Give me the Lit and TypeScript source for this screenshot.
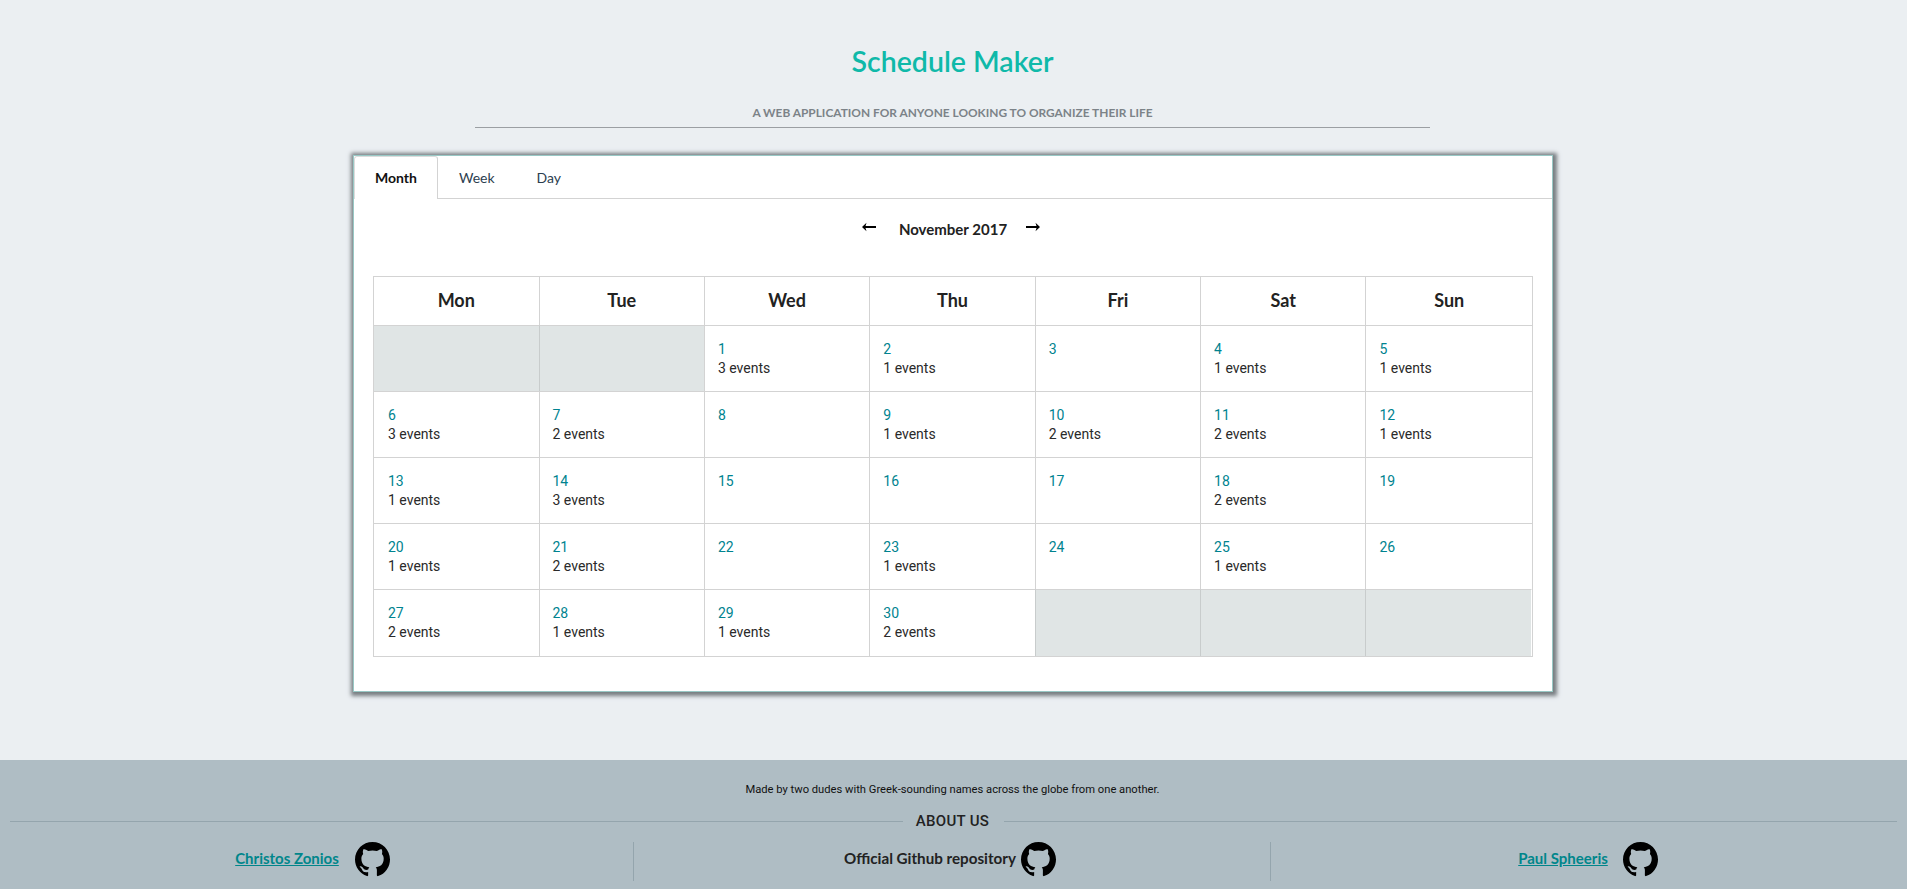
import { LitElement, html, css, svg } from "lit";
import { customElement } from "lit/decorators.js";

const GH = svg`<path fill-rule="evenodd" d="M8 0C3.58 0 0 3.58 0 8c0 3.54 2.29 6.53 5.47 7.59.4.07.55-.17.55-.38 0-.19-.01-.82-.01-1.49-2.01.37-2.53-.49-2.69-.94-.09-.23-.48-.94-.82-1.13-.28-.15-.68-.52-.01-.53.63-.01 1.08.58 1.23.82.72 1.21 1.87.87 2.33.66.07-.52.28-.87.51-1.07-1.78-.2-3.64-.89-3.64-3.95 0-.87.31-1.59.82-2.15-.08-.2-.36-1.02.08-2.12 0 0 .67-.21 2.2.82.64-.18 1.32-.27 2-.27s1.36.09 2 .27c1.53-1.04 2.2-.82 2.2-.82.44 1.1.16 1.92.08 2.12.51.56.82 1.27.82 2.15 0 3.07-1.87 3.75-3.65 3.95.29.25.54.73.54 1.48 0 1.07-.01 1.93-.01 2.2 0 .21.15.46.55.38A8.01 8.01 0 0 0 16 8c0-4.42-3.58-8-8-8z"/>`;

const ghIcon = () => html`<svg class="gh" viewBox="0 0 16 16" aria-hidden="true">${GH}</svg>`;

const DAYS = ["Mon", "Tue", "Wed", "Thu", "Fri", "Sat", "Sun"];
// null = cell outside the month
const CELLS: ([number, number] | null)[] = [
  null, null, [1, 3], [2, 1], [3, 0], [4, 1], [5, 1],
  [6, 3], [7, 2], [8, 0], [9, 1], [10, 2], [11, 2], [12, 1],
  [13, 1], [14, 3], [15, 0], [16, 0], [17, 0], [18, 2], [19, 0],
  [20, 1], [21, 2], [22, 0], [23, 1], [24, 0], [25, 1], [26, 0],
  [27, 2], [28, 1], [29, 1], [30, 2], null, null, null,
];

@customElement("app-root")
export class AppRoot extends LitElement {
  static styles = css`
    :host {
      display: block;
      height: 889px;
      overflow: hidden;
      background: #ebeff2;
      font-family: "Lato", sans-serif;
      color: #222;
    }
    .main { width: 1906px; }
    .head { display: flex; flex-direction: column; align-items: center; height: 155px; padding-right: 1px; box-sizing: border-box; }
    h1 {
      margin: 43px 0 0;
      height: 36px;
      line-height: 36px;
      font-size: 28.5px;
      font-weight: 600;
      color: #0fb9a9;
    }
    .sub {
      margin-top: 26px;
      width: 955px;
      height: 23px;
      box-sizing: border-box;
      text-align: center;
      font-size: 11.9px;
      line-height: 16px;
      font-weight: 700;
      color: #7c8388;
      text-transform: uppercase;
      border-bottom: 1px solid #9b9fa3;
    }
    .card {
      box-sizing: border-box;
      width: 1200px;
      height: 537px;
      margin: 0 auto;
      background: #fff;
      border: 1px solid #98c8c5;
      box-shadow: 1px 1px 4px 3px #777d81;
    }
    .tabs { display: flex; height: 43px; box-sizing: border-box; border-bottom: 1px solid #d3d3d3; font-size: 14px; }
    .tab { padding: 0 21px; line-height: 43px; color: #2c3e50; }
    .tab.on {
      height: 43px;
      box-sizing: border-box;
      padding: 0 20px;
      line-height: 41px;
      background: #fff;
      font-weight: 700;
      color: #111;
      border: 1px solid #dcdcdc;
      border-right-color: #d3d3d3;
      border-bottom: 0;
      border-radius: 3px 3px 0 0;
    }
    .nav {
      display: flex;
      justify-content: center;
      align-items: center;
      gap: 20px;
      height: 60px;
      padding-right: 4px;
      font-size: 15px;
      font-weight: 700;
    }
    .nav svg { width: 14px; height: 10px; display: block; margin-top: -4px; }
    .nav svg.prev { margin-right: 3px; }
    .nav svg.next { margin-left: -1px; }
    .table { display: flex; flex-direction: column; margin: 17px 19px 0; border: 1px solid #d3d3d3; }
    .row, .cells { display: grid; grid-template-columns: 164.5px repeat(5, 165.4px) 1fr; }
    .row.days { height: 48px; }
    .day-h {
      display: flex;
      align-items: center;
      justify-content: center;
      box-sizing: border-box;
      padding-bottom: 2px;
      font-size: 18px;
      font-weight: 700;
      border-left: 1px solid #d3d3d3;
    }
    .day-h:first-child { border-left: 0; }
    .cells { grid-template-rows: repeat(4, 66px) 67px; }
    .cell {
      box-sizing: border-box;
      padding: 14px 13px 0;
      border-top: 1px solid #d3d3d3;
      border-left: 1px solid #d3d3d3;
      font-family: "Roboto", sans-serif;
      font-size: 14px;
      line-height: 19.5px;
      color: #2a2a2a;
    }
    .cell:nth-child(7n + 1) { border-left: 0; padding-left: 14px; }
    .cell.off { background: #e0e5e5; border-left-color: #c8cccc; }
    .cell.off:nth-child(7n) { border-right: 1px solid #fff; }
    .num { color: #00838f; display: block; height: 18.5px; line-height: 18.5px; }
    footer {
      box-sizing: border-box;
      height: 129px;
      margin-top: 68px;
      background: #afbdc4;
      text-align: center;
      font-family: "Roboto", sans-serif;
      color: #111;
    }
    .made { padding: 23px 2px 0 0; height: 14px; line-height: 14px; font-size: 11.2px; }
    .about {
      display: flex;
      align-items: center;
      gap: 14px;
      margin: 13px 10px 0;
      height: 22px;
      font-size: 15px;
      font-weight: 500;
      letter-spacing: 0.3px;
      color: #222;
    }
    .about::before, .about::after { content: ""; flex: 1; height: 1px; background: #94a5ad; }
    .about::before { margin-right: -1px; }
    .about::after { margin-left: 1px; }
    .cols { display: grid; grid-template-columns: 633px 637px 1fr; margin-top: 10px; font-family: "Lato", sans-serif; font-size: 15px; font-weight: 700; }
    .col {
      display: flex;
      align-items: center;
      justify-content: center;
      height: 39px;
      border-left: 1px solid #94a5ad;
      box-sizing: border-box;
    }
    .col:nth-child(1) { border-left: 0; padding-right: 8px; }
    .col:nth-child(2) { padding-right: 4px; }
    .col:nth-child(3) { padding-right: 2px; }
    .col .t { margin: 0 5px 7px 0; font-size: 15.2px; color: #222; }
    .col a { color: #00868b; text-decoration: underline; margin: 0 15px 7px 0; }
    .col:nth-child(1) a { margin-right: 16px; }
    .gh { width: 35px; height: 35px; margin-bottom: 4px; display: block; fill: #000; }
  `;

  render() {
    return html`
      <div class="main">
        <div class="head">
          <h1>Schedule Maker</h1>
          <div class="sub">A web application for anyone looking to organize their life</div>
        </div>
        <div class="card">
          <div class="tabs">
            <div class="tab on">Month</div>
            <div class="tab">Week</div>
            <div class="tab">Day</div>
          </div>
          <div class="nav">
            <svg class="prev" viewBox="0 0 14 10" aria-hidden="true"><path d="M14 4H3.5L4.5.8 0 5l4.5 4.2-1-3.2H14z"/></svg>
            <span>November 2017</span>
            <svg class="next" viewBox="0 0 14 10" aria-hidden="true"><path d="M0 4h10.5L9.5.8 14 5 9.5 9.2l1-3.2H0z"/></svg>
          </div>
          <div class="table">
            <div class="row days">${DAYS.map((d) => html`<div class="day-h">${d}</div>`)}</div>
            <div class="cells">
              ${CELLS.map((c) =>
                c
                  ? html`<div class="cell"><span class="num">${c[0]}</span>${c[1] ? html`${c[1]} events` : ""}</div>`
                  : html`<div class="cell off"></div>`
              )}
            </div>
          </div>
        </div>
      </div>
      <footer>
        <div class="made">Made by two dudes with Greek-sounding names across the globe from one another.</div>
        <div class="about">ABOUT US</div>
        <div class="cols">
          <div class="col"><a href="#">Christos Zonios</a>${ghIcon()}</div>
          <div class="col"><span class="t">Official Github repository</span>${ghIcon()}</div>
          <div class="col"><a href="#">Paul Spheeris</a>${ghIcon()}</div>
        </div>
      </footer>
    `;
  }
}
